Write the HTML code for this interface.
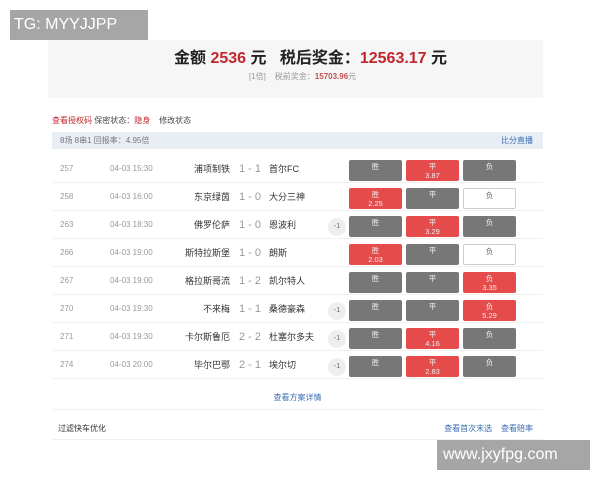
<!DOCTYPE html><html><head><meta charset="utf-8"><style>
*{margin:0;padding:0;box-sizing:border-box}
body{width:600px;height:480px;background:#fff;font-family:"Liberation Sans","Noto Sans CJK SC",sans-serif;position:relative;overflow:hidden;color:#333}
.a{position:absolute;white-space:nowrap}
.top{left:48px;top:40px;width:495px;height:58px;background:#f6f6f6}
.r{color:#c0262d}
.bar{left:52px;top:132px;width:491px;height:17px;background:#e9eef5;font-size:8px;color:#777;line-height:17px}
.row{position:absolute;left:52px;width:491px;height:28px;border-bottom:1px solid #f0f0f0;font-size:9px}
.row span{position:absolute;top:0;line-height:28px}
.b{position:absolute;top:5px;width:53px;height:21px;border-radius:2px;background:#777;color:#eee;font-size:7.5px;text-align:center;line-height:9px;padding-top:2px}
.b.red{background:#e64b4b}
.b.w{background:#fff;border:1px solid #ccc;color:#666}
.m{position:absolute;left:276px;top:7px;width:18px;height:18px;border-radius:9px;background:#eee;font-size:7px;text-align:center;line-height:18px;color:#666}
.wm{background:#a6a6a6;color:#fff;font-size:16px;line-height:30px}
</style></head><body>
<div class="a wm" style="left:10px;top:10px;width:138px;height:30px;padding-left:4px">TG: MYYJJPP</div>
<div class="a top"></div>
<div class="a" style="left:174px;top:44px;font-size:16px;font-weight:bold;color:#222">金额 <span class="r">2536</span> 元 &nbsp; 税后奖金：<span class="r">12563.17</span> 元</div>
<div class="a" style="left:249px;top:71px;font-size:8px;color:#999">[1倍] &nbsp;&nbsp; 税前奖金：<b style="color:#c05050">15703.96</b>元</div>
<div class="a" style="left:52px;top:115px;font-size:8px;color:#444"><span class="r">查看授权码</span> 保密状态：<span class="r">隐身</span> &nbsp;&nbsp; 修改状态</div>
<div class="a bar"><span style="margin-left:8px">8场 8串1 回报率：4.95倍</span><span style="position:absolute;right:10px;color:#3a6db5">比分直播</span></div>
<div id="rows"></div>
<div class="a" style="left:52px;top:386px;width:491px;height:24px;border-bottom:1px solid #f0f0f0;text-align:center;line-height:24px;font-size:8px;color:#3a6db5">查看方案详情</div>
<div class="a" style="left:52px;top:418px;width:491px;height:22px;border-bottom:1px solid #f0f0f0;line-height:22px;font-size:8px;color:#333"><span style="margin-left:6px">过滤快车优化</span><span style="position:absolute;right:10px;color:#3a6db5">查看首次末选 &nbsp;&nbsp; 查看赔率</span></div>
<div class="a wm" style="left:437px;top:440px;width:153px;height:30px;padding-left:6px">www.jxyfpg.com</div>
<script>
var d=[["257","15:30","浦项制铁","1 - 1","首尔FC",0,["g","r3.87","g"]],
["258","16:00","东京绿茵","1 - 0","大分三神",0,["r2.25","g","w"]],
["263","18:30","佛罗伦萨","1 - 0","恩波利",1,["g","r3.29","g"]],
["266","19:00","斯特拉斯堡","1 - 0","朗斯",0,["r2.03","g","w"]],
["267","19:00","格拉斯哥流","1 - 2","凯尔特人",0,["g","g","r3.35"]],
["270","19:30","不来梅","1 - 1","桑德豪森",1,["g","g","r5.29"]],
["271","19:30","卡尔斯鲁厄","2 - 2","杜塞尔多夫",1,["g","r4.16","g"]],
["274","20:00","毕尔巴鄂","2 - 1","埃尔切",1,["g","r2.83","g"]]];
var n=["胜","平","负"],h="";
d.forEach(function(r,i){h+='<div class="row" style="top:'+(155+i*28)+'px"><span style="left:8px;color:#999;font-size:8px">'+r[0]+'</span><span style="left:58px;color:#999;font-size:8px">04-03 '+r[1]+'</span><span style="right:313px">'+r[2]+'</span><span style="left:185px;width:26px;text-align:center;color:#999;font-size:11px">'+r[3]+'</span><span style="left:217px">'+r[4]+'</span>'+(r[5]?'<div class="m">-1</div>':'');
r[6].forEach(function(c,j){var cl=c[0]=="r"?"b red":c=="w"?"b w":"b";h+='<div class="'+cl+'" style="left:'+(297+j*57)+'px">'+n[j]+(c[0]=="r"?'<br>'+c.slice(1):'')+'</div>'});h+='</div>'});
document.getElementById("rows").innerHTML=h;
</script></body></html>
